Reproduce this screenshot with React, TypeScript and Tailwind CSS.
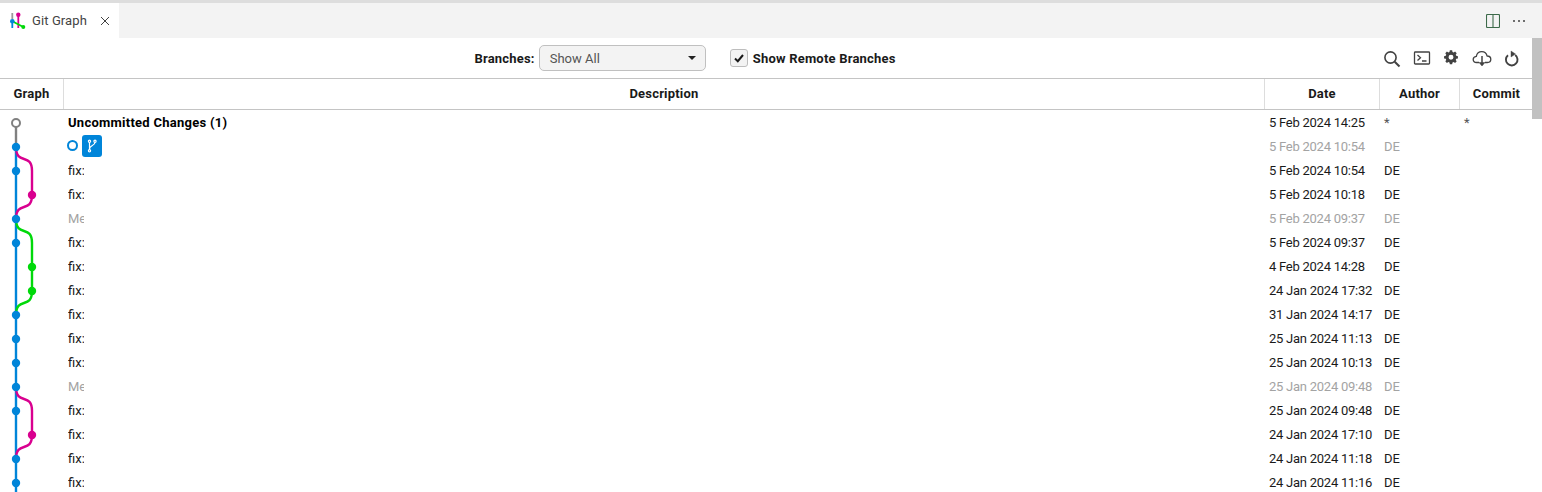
const FONT = "font-['Roboto','Noto_Sans',sans-serif]";

interface Commit {
  date: string;
  text: string;
  author: string;
  hash?: string;
  muted?: boolean;
  head?: boolean;
  bold?: boolean;
}

const commits: Commit[] = [
  { text: "Uncommitted Changes (1)", date: "5 Feb 2024 14:25", author: "*", hash: "*", bold: true },
  { text: "", date: "5 Feb 2024 10:54", author: "DE", muted: true, head: true },
  { text: "fix:", date: "5 Feb 2024 10:54", author: "DE" },
  { text: "fix:", date: "5 Feb 2024 10:18", author: "DE" },
  { text: "Me", date: "5 Feb 2024 09:37", author: "DE", muted: true },
  { text: "fix:", date: "5 Feb 2024 09:37", author: "DE" },
  { text: "fix:", date: "4 Feb 2024 14:28", author: "DE" },
  { text: "fix:", date: "24 Jan 2024 17:32", author: "DE" },
  { text: "fix:", date: "31 Jan 2024 14:17", author: "DE" },
  { text: "fix:", date: "25 Jan 2024 11:13", author: "DE" },
  { text: "fix:", date: "25 Jan 2024 10:13", author: "DE" },
  { text: "Me", date: "25 Jan 2024 09:48", author: "DE", muted: true },
  { text: "fix:", date: "25 Jan 2024 09:48", author: "DE" },
  { text: "fix:", date: "24 Jan 2024 17:10", author: "DE" },
  { text: "fix:", date: "24 Jan 2024 11:18", author: "DE" },
  { text: "fix:", date: "24 Jan 2024 11:16", author: "DE" },
];

const BLUE = "#0085d9";
const PINK = "#d9008f";
const GREEN = "#00d90a";

const blueNodes = [36, 60, 108, 132, 204, 228, 252, 276, 300, 348, 372];
const pinkNodes = [84, 324];
const greenNodes = [156, 180];

function Graph() {
  return (
    <svg className="absolute left-0 top-[1px]" width={64} height={384} fill="none">
      <path d="M16 12V36" stroke="#808080" strokeWidth={2.4} />
      <path d="M16 36V384" stroke={BLUE} strokeWidth={2.4} />
      <path d="M16 36C16 55 32 41 32 60V84C32 103 16 89 16 108" stroke={PINK} strokeWidth={2.4} />
      <path d="M16 108C16 127 32 113 32 132V180C32 199 16 185 16 204" stroke={GREEN} strokeWidth={2.4} />
      <path d="M16 276C16 295 32 281 32 300V324C32 343 16 329 16 348" stroke={PINK} strokeWidth={2.4} />
      <circle cx={16} cy={12} r={4} fill="#fff" stroke="#808080" strokeWidth={2} />
      {blueNodes.map((y) => (
        <circle key={y} cx={16} cy={y} r={4.2} fill={BLUE} />
      ))}
      {pinkNodes.map((y) => (
        <circle key={y} cx={32} cy={y} r={4.2} fill={PINK} />
      ))}
      {greenNodes.map((y) => (
        <circle key={y} cx={32} cy={y} r={4.2} fill={GREEN} />
      ))}
    </svg>
  );
}

function TabIcon() {
  return (
    <svg width={16} height={17} viewBox="0 0 16 17" fill="none">
      <path d="M2.300 1V7" stroke="#9a9a9a" strokeWidth={1.800} />
      <path d="M2.300 9V16" stroke="#0085d9" strokeWidth={1.800} />
      <path d="M8.300 2.700V16" stroke="#d9008f" strokeWidth={1.800} />
      <path d="M2.300 9.300L13.300 15" stroke="#00d90a" strokeWidth={1.800} />
      <circle cx={2.300} cy={9.300} r={2.300} fill="#0085d9" />
      <circle cx={8.300} cy={2.700} r={2.200} fill="#d9008f" />
      <circle cx={13.300} cy={15} r={2} fill="#00d90a" />
    </svg>
  );
}

function BranchBadge() {
  return (
    <svg width={12} height={14} viewBox="0 0 12 14" fill="none" stroke="#fff" strokeWidth={1.200}>
      <circle cx={3.500} cy={2.200} r={1.100} />
      <circle cx={3.500} cy={11.800} r={1.100} />
      <circle cx={9} cy={2.200} r={1.100} />
      <path d="M3.500 3.300V10.700M9 3.300C9 7 3.500 6 3.500 10" />
    </svg>
  );
}

function ToolbarIcons() {
  return (
    <div className="flex items-center gap-[10px] text-[#424242]">
      <svg width={20} height={20} viewBox="0 0 20 20" fill="none" stroke="currentColor" strokeWidth={1.600}>
        <circle cx={8.500} cy={9.500} r={5.600} />
        <path d="M12.700 13.700L17.500 18.500" strokeWidth={2} />
      </svg>
      <svg width={20} height={20} viewBox="0 0 20 20" fill="none" stroke="currentColor" strokeWidth={1.300}>
        <rect x={2.500} y={4} width={15} height={12} rx={0.800} />
        <path d="M5.500 7L8.500 9.800L5.500 12.600M10 13H14.500" />
      </svg>
      <svg width={20} height={20} viewBox="0 0 20 20" fill="currentColor">
        <path
          fillRule="evenodd"
          d="M8.800 3h2.400l.4 1.800 1.200.5 1.500-1 1.700 1.700-1 1.500.5 1.200 1.800.4v2.400l-1.800.4-.5 1.200 1 1.500-1.700 1.700-1.500-1-1.200.5-.4 1.800H8.800l-.4-1.800-1.200-.5-1.500 1-1.700-1.700 1-1.500-.5-1.200-1.800-.4V9.100l1.800-.4.500-1.200-1-1.500 1.700-1.700 1.500 1 1.200-.5zM10 7.700a2.600 2.600 0 1 0 0 5.200 2.600 2.600 0 0 0 0-5.200z"
          transform="translate(-0.500 -0.500) scale(0.950)"
        />
      </svg>
      <svg width={20} height={20} viewBox="0 0 20 20" fill="none" stroke="currentColor" strokeWidth={1.300}>
        <path d="M7 14.500H4.500C2.500 14.500 1.200 13.300 1.200 11.500S2.500 8.600 4.300 8.400C4.900 5.400 7 3.700 9.800 3.700c2.600 0 4.700 1.700 5.300 4.300 2 .1 3.700 1.300 3.700 3.300s-1.500 3.200-3.500 3.200H13" />
        <path d="M10 8V15" strokeWidth={1.500} />
        <path d="M7 14.500H13L10 18Z" fill="currentColor" strokeWidth={0.500} />
      </svg>
      <svg width={20} height={20} viewBox="0 0 20 20" fill="none" stroke="currentColor" strokeWidth={1.900}>
        <path d="M6 7.200A5.800 5.800 0 1 0 13.200 7" />
        <path d="M9 3L13.500 6L9 9Z" fill="currentColor" strokeWidth={0.400} />
      </svg>
    </div>
  );
}

export default function App() {
  return (
    <div className={`relative h-[492px] w-[1542px] overflow-hidden bg-white text-[13px] text-[#1a1a1a] ${FONT}`}>
      <div className="h-[3px] bg-[#dddddd]" />
      <div className="flex h-[35px] items-center bg-[#f3f3f3]">
        <div className="flex h-full w-[119px] items-center bg-white pl-[10px]">
          <TabIcon />
          <span className="ml-[6px] text-[13px] tracking-[0.1px] text-[#444444]">Git Graph</span>
          <svg className="ml-[13px]" width={10} height={10} viewBox="0 0 10 10" stroke="#424242" strokeWidth={1}>
            <path d="M1 1L9 9M9 1L1 9" />
          </svg>
        </div>
        <div className="ml-auto flex items-center gap-[13px] pr-[17px]">
          <svg width={14} height={14} viewBox="0 0 14 14" fill="none" stroke="#3c6a4a" strokeWidth={1.100}>
            <rect x={0.500} y={0.500} width={13} height={13} rx={1} />
            <path d="M7 0.500V13.500" />
          </svg>
          <span className="flex gap-[3px]">
            <span className="h-[2px] w-[2px] rounded-full bg-[#424242]" />
            <span className="h-[2px] w-[2px] rounded-full bg-[#424242]" />
            <span className="h-[2px] w-[2px] rounded-full bg-[#424242]" />
          </span>
        </div>
      </div>

      <div className="relative flex h-[41px] items-center justify-center border-b border-[#c4c4c4] pr-[172px]">
        <span className="pt-[1px] font-bold tracking-[0.2px]">Branches:</span>
        <div className="ml-[4px] flex h-[26px] w-[167px] items-center justify-between rounded-[5px] border border-[#c0c0c0] bg-[#f3f3f3] pl-[10px] pr-[9px] text-[#555555]">
          <span className="pt-[1px]">Show All</span>
          <span className="h-0 w-0 border-x-[4px] border-t-[4px] border-x-transparent border-t-[#222222]" />
        </div>
        <div className="ml-[24px] flex h-[18px] w-[18px] items-center justify-center rounded-[3px] border border-[#bdbdbd] bg-[#f3f3f3]">
          <svg width={12} height={12} viewBox="0 0 12 12" fill="none" stroke="#1a1a1a" strokeWidth={2}>
            <path d="M2 6.500L4.800 9.200L10 3" />
          </svg>
        </div>
        <span className="ml-[5px] pt-[1px] font-bold tracking-[0.2px]">Show Remote Branches</span>
        <div className="absolute right-[20px] top-[10px]">
          <ToolbarIcons />
        </div>
      </div>

      <div className="flex h-[31px] items-center border-b border-[#c4c4c4] font-bold tracking-[0.2px]">
        <div className="flex h-full w-[64px] items-center justify-center border-r border-[#dddddd]">Graph</div>
        <div className="flex h-full w-[1201px] items-center justify-center border-r border-[#dddddd]">Description</div>
        <div className="flex h-full w-[115px] items-center justify-center border-r border-[#dddddd]">Date</div>
        <div className="flex h-full w-[80px] items-center justify-center border-r border-[#dddddd]">Author</div>
        <div className="flex h-full w-[73px] items-center justify-center">Commit</div>
      </div>

      <div className="relative">
        <Graph />
        {commits.map((c, i) => (
          <div key={i} className={`flex h-[24px] items-center pt-[1px] ${c.muted ? "text-[#a3a3a3]" : ""}`}>
            <div className="w-[64px] shrink-0" />
            <div className="flex w-[1201px] shrink-0 items-center pl-[4px]">
              {c.head && (
                <>
                  <span className="-ml-[1px] -mt-[2px] h-[11px] w-[11px] rounded-full border-2 border-[#0085d9]" />
                  <span className="ml-[4px] -mt-[1px] flex h-[22px] w-[20px] items-center justify-center rounded-[3px] bg-[#0085d9]">
                    <BranchBadge />
                  </span>
                </>
              )}
              {c.bold ? (
                <span className="font-bold tracking-[0.26px] text-black">{c.text}</span>
              ) : (
                c.text && <span className="block w-[16px] overflow-hidden whitespace-nowrap">{c.text}</span>
              )}
            </div>
            <div className="w-[115px] shrink-0 whitespace-nowrap pl-[4px] tracking-[-0.25px]">{c.date}</div>
            <div className={`w-[80px] shrink-0 pl-[4px] ${c.hash ? "text-[#555555]" : ""}`}>{c.author}</div>
            <div className="pl-[4px] text-[#555555]">{c.hash}</div>
          </div>
        ))}
      </div>

      <div className="absolute right-0 top-[38px] h-[81px] w-[10px] bg-[#c1c1c1]" />
    </div>
  );
}
